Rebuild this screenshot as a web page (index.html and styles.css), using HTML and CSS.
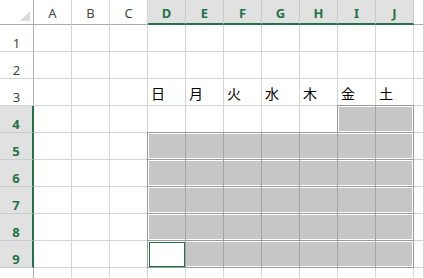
FILE: index.html
```html
<!DOCTYPE html>
<html lang="ja">
<head>
  <meta charset="UTF-8" />
  <title>Sheet</title>
  <link rel="stylesheet" href="styles.css">
</head>
<body>

  <div class="sheet">
    <!-- column headers -->
    <div class="corner"></div>
    <div class="col-head">A</div>
    <div class="col-head">B</div>
    <div class="col-head">C</div>
    <div class="col-head sel">D</div>
    <div class="col-head sel">E</div>
    <div class="col-head sel">F</div>
    <div class="col-head sel">G</div>
    <div class="col-head sel">H</div>
    <div class="col-head sel">I</div>
    <div class="col-head sel">J</div>
    <div class="col-head"></div>

    <!-- row 1 -->
    <div class="row-head">1</div>
    <div class="cell"></div><div class="cell"></div><div class="cell"></div>
    <div class="cell"></div><div class="cell"></div><div class="cell"></div>
    <div class="cell"></div><div class="cell"></div><div class="cell"></div>
    <div class="cell"></div><div class="cell"></div>

    <!-- row 2 -->
    <div class="row-head">2</div>
    <div class="cell"></div><div class="cell"></div><div class="cell"></div>
    <div class="cell"></div><div class="cell"></div><div class="cell"></div>
    <div class="cell"></div><div class="cell"></div><div class="cell"></div>
    <div class="cell"></div><div class="cell"></div>

    <!-- row 3: weekdays -->
    <div class="row-head">3</div>
    <div class="cell"></div><div class="cell"></div><div class="cell"></div>
    <div class="cell day">日</div>
    <div class="cell day">月</div>
    <div class="cell day">火</div>
    <div class="cell day">水</div>
    <div class="cell day">木</div>
    <div class="cell day">金</div>
    <div class="cell day">土</div>
    <div class="cell"></div>

    <!-- row 4 -->
    <div class="row-head sel">4</div>
    <div class="cell"></div><div class="cell"></div><div class="cell"></div>
    <div class="cell"></div><div class="cell"></div><div class="cell"></div>
    <div class="cell"></div><div class="cell"></div>
    <div class="block short"><div></div><div></div></div>
    <div class="cell"></div>

    <!-- rows 5 - 9 -->
    <div class="row-head sel">5</div>
    <div class="cell"></div><div class="cell"></div><div class="cell"></div>
    <div class="block week"><div></div><div></div><div></div><div></div><div></div><div></div><div></div></div>
    <div class="cell"></div>

    <div class="row-head sel">6</div>
    <div class="cell"></div><div class="cell"></div><div class="cell"></div>
    <div class="block week"><div></div><div></div><div></div><div></div><div></div><div></div><div></div></div>
    <div class="cell"></div>

    <div class="row-head sel">7</div>
    <div class="cell"></div><div class="cell"></div><div class="cell"></div>
    <div class="block week"><div></div><div></div><div></div><div></div><div></div><div></div><div></div></div>
    <div class="cell"></div>

    <div class="row-head sel">8</div>
    <div class="cell"></div><div class="cell"></div><div class="cell"></div>
    <div class="block week"><div></div><div></div><div></div><div></div><div></div><div></div><div></div></div>
    <div class="cell"></div>

    <div class="row-head sel">9</div>
    <div class="cell"></div><div class="cell"></div><div class="cell"></div>
    <div class="block week"><div class="active"></div><div></div><div></div><div></div><div></div><div></div><div></div></div>
    <div class="cell"></div>

    <!-- next row, cut off by the window -->
    <div class="row-head"></div>
    <div class="cell"></div><div class="cell"></div><div class="cell"></div>
    <div class="cell"></div><div class="cell"></div><div class="cell"></div>
    <div class="cell"></div><div class="cell"></div><div class="cell"></div>
    <div class="cell"></div><div class="cell"></div>
  </div>

</body>
</html>
```

FILE: styles.css
```css
html, body {
  margin: 0;
  overflow: hidden;
  background: #fff;
}

body {
  font-family: "Noto Sans", "Liberation Sans", sans-serif;
}

.sheet {
  display: grid;
  grid-template-columns: 34px repeat(10, 38px) 10px;
  grid-template-rows: 25px repeat(9, 27px) 11px;
  width: 424px;
  height: 278px;
  overflow: hidden;
}

.sheet div {
  box-sizing: border-box;
}

/* top left corner */
.corner {
  border-right: 1px solid #b1b1b1;
  border-bottom: 1px solid #ababab;
  display: flex;
  justify-content: flex-end;
  align-items: flex-end;
  padding: 0 3px 3px 0;
}
.corner::after {
  content: "";
  border-left: 10px solid transparent;
  border-bottom: 10px solid #dadada;
}

.col-head {
  border-right: 1px solid #d4d4d4;
  border-bottom: 1px solid #ababab;
  display: flex;
  justify-content: center;
  align-items: flex-end;
  padding-bottom: 4px;
  font-size: 13px;
  line-height: 13px;
  color: #444;
}
.col-head.sel {
  background: #e1e1e1;
  border-right-color: #c8c8c8;
  border-bottom: 2px solid #217346;
  padding-bottom: 3px;
  color: #217346;
  font-weight: bold;
}

.row-head {
  border-right: 1px solid #b1b1b1;
  border-bottom: 1px solid #d4d4d4;
  display: flex;
  justify-content: center;
  align-items: flex-end;
  padding-bottom: 1px;
  font-size: 13px;
  line-height: 13px;
  color: #444;
}
.row-head.sel {
  background: #e1e1e1;
  border-right: 2px solid #217346;
  border-bottom-color: #cdcdcd;
  color: #217346;
  font-weight: bold;
}

.cell {
  border-right: 1px solid #d4d4d4;
  border-bottom: 1px solid #d4d4d4;
}

.day {
  font-family: "Noto Sans CJK JP", sans-serif;
  font-size: 14px;
  line-height: 14px;
  display: flex;
  align-items: flex-end;
  padding: 0 0 5px 3px;
  color: #000;
}

/* grey ranges */
.block {
  margin: -1px 0 0 -1px;
  border: 1px solid #9b9b9b;
  background: #c6c6c6;
  box-shadow: inset 0 0 0 1px #fff;
  display: grid;
}
.block.week {
  grid-column: span 7;
  grid-template-columns: repeat(6, 38px) 1fr;
}
.block.short {
  grid-column: span 2;
  grid-template-columns: 38px 1fr;
}
.block > div {
  border-right: 1px solid #a5a5a5;
}
.block > div:last-child {
  border-right: 0;
}

.active {
  background: #fff;
  padding: 1px 0 0 1px;
}
.active::after {
  content: "";
  display: block;
  box-sizing: border-box;
  height: 100%;
  border: 1px solid #217346;
}
```
